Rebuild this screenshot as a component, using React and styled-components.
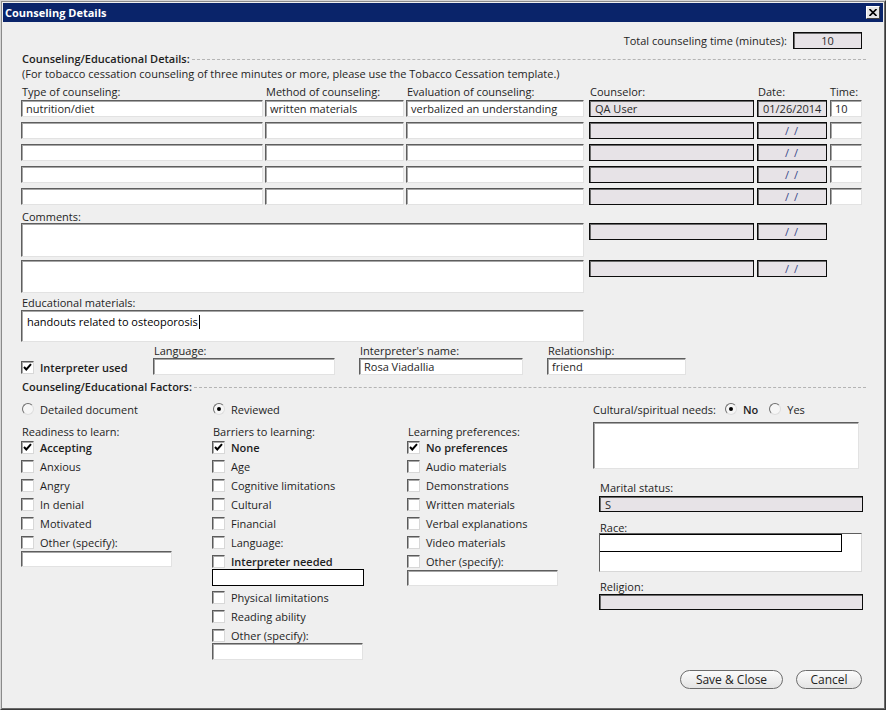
import React from "react"
import styled, { createGlobalStyle, css } from "styled-components"

const GlobalStyle = createGlobalStyle`
  html, body {
    margin: 0;
    padding: 0;
    background: #efefef;
  }
  body {
    font-family: "Open Sans", "Noto Sans", sans-serif;
    font-size: 11px;
    color: #1e1e1e;
  }
  * {
    box-sizing: border-box;
  }
`

const COLS = "244px 141px 183px 168px 73px 32px"

const readiness = ["Accepting", "Anxious", "Angry", "In denial", "Motivated"]
const barriersTop = ["None", "Age", "Cognitive limitations", "Cultural", "Financial", "Language:"]
const barriersBottom = ["Physical limitations", "Reading ability"]
const preferences = [
  "No preferences",
  "Audio materials",
  "Demonstrations",
  "Written materials",
  "Verbal explanations",
  "Video materials",
]

const emptyRows = [1, 2, 3, 4]

function CheckBox({ checked }) {
  return (
    <Box>
      {checked && (
        <svg width="9" height="9" viewBox="0 0 9 9">
          <path d="M1 4 L3.3 6.5 L8 1.2" fill="none" stroke="#000" strokeWidth="2" />
        </svg>
      )}
    </Box>
  )
}

function CheckItem({ label, checked }) {
  return (
    <CheckRow>
      <CheckBox checked={checked} />
      <CheckText $bold={checked}>{label}</CheckText>
    </CheckRow>
  )
}

function Radio({ label, checked }) {
  return (
    <RadioItem>
      <RadioDot $on={checked} />
      <CheckText $bold={checked && label === "No"}>{label}</CheckText>
    </RadioItem>
  )
}

function App() {
  return (
    <>
      <GlobalStyle />
      <Window>
        <TitleBar>
          <Title>Counseling Details</Title>
          <CloseBtn>
            <svg width="8" height="7" viewBox="0 0 8 7">
              <path d="M0.5 0 L7.5 7 M7.5 0 L0.5 7" stroke="#000" strokeWidth="1.6" />
            </svg>
          </CloseBtn>
        </TitleBar>
        <Body>
          <TotalRow>
            <span>Total counseling time (minutes):</span>
            <ReadBox $w={69} $center>10</ReadBox>
          </TotalRow>

          <Heading>
            <span>Counseling/Educational Details:</span>
            <Rule />
          </Heading>
          <Note>
            (For tobacco cessation counseling of three minutes or more, please use the Tobacco
            Cessation template.)
          </Note>

          <TableHead>
            <ColLabel>Type of counseling:</ColLabel>
            <ColLabel>Method of counseling:</ColLabel>
            <ColLabel>Evaluation of counseling:</ColLabel>
            <ColLabel>Counselor:</ColLabel>
            <ColLabel>Date:</ColLabel>
            <ColLabel $pad={0}>Time:</ColLabel>
          </TableHead>
          <TableBody>
            <Field $w={242}>nutrition/diet</Field>
            <Field $w={139}>written materials</Field>
            <Field $w={178}>verbalized an understanding</Field>
            <ReadBox $w={165}>QA User</ReadBox>
            <ReadBox $w={70} $center>01/26/2014</ReadBox>
            <Field $w={32}>10</Field>
            {emptyRows.map((n) => (
              <React.Fragment key={n}>
                <Field $w={242} />
                <Field $w={139} />
                <Field $w={178} />
                <ReadBox $w={165} />
                <ReadBox $w={70} $center>
                  <Slashes>/ /</Slashes>
                </ReadBox>
                <Field $w={32} />
              </React.Fragment>
            ))}
          </TableBody>

          <FieldLabel $top={5}>Comments:</FieldLabel>
          <CommentGrid>
            <TextArea $h={34} />
            <ReadBox $w={165} />
            <ReadBox $w={70} $center>
              <Slashes>/ /</Slashes>
            </ReadBox>
            <TextArea $h={33} />
            <ReadBox $w={165} />
            <ReadBox $w={70} $center>
              <Slashes>/ /</Slashes>
            </ReadBox>
          </CommentGrid>

          <FieldLabel $top={3}>Educational materials:</FieldLabel>
          <EduBox>
            handouts related to osteoporosis<Caret />
          </EduBox>

          <InterpreterRow>
            <InterpreterCheck>
              <CheckBox checked />
              <CheckText $bold>Interpreter used</CheckText>
            </InterpreterCheck>
            <Column>
              <FieldLabel $indent={1}>Language:</FieldLabel>
              <Field $w={182} />
            </Column>
            <Column>
              <FieldLabel>Interpreter&apos;s name:</FieldLabel>
              <Field $w={164}>Rosa Viadallia</Field>
            </Column>
            <Column>
              <FieldLabel>Relationship:</FieldLabel>
              <Field $w={139}>friend</Field>
            </Column>
          </InterpreterRow>

          <Heading $top={5}>
            <span>Counseling/Educational Factors:</span>
            <Rule />
          </Heading>

          <FactorsGrid>
            <Radio label="Detailed document" />
            <Radio label="Reviewed" checked />
            <div />
            <NeedsRow>
              <span>Cultural/spiritual needs:</span>
              <Radio label="No" checked />
              <Radio label="Yes" />
            </NeedsRow>

            <List>
              <ListTitle>Readiness to learn:</ListTitle>
              {readiness.map((r, i) => (
                <CheckItem key={r} label={r} checked={i === 0} />
              ))}
              <CheckItem label="Other (specify):" />
              <Field $w={151} $h={16} $mt={-1} />
            </List>

            <List>
              <ListTitle>Barriers to learning:</ListTitle>
              {barriersTop.map((b, i) => (
                <CheckItem key={b} label={b} checked={i === 0} />
              ))}
              <CheckRow>
                <CheckBox />
                <CheckText $bold>Interpreter needed</CheckText>
              </CheckRow>
              <PlainBox />
              {barriersBottom.map((b) => (
                <CheckItem key={b} label={b} />
              ))}
              <CheckItem label="Other (specify):" />
              <Field $w={151} $mt={-2} />
            </List>

            <List>
              <ListTitle>Learning preferences:</ListTitle>
              {preferences.map((p, i) => (
                <CheckItem key={p} label={p} checked={i === 0} />
              ))}
              <CheckItem label="Other (specify):" />
              <Field $w={151} $h={16} $mt={-1} />
            </List>

            <SideColumn>
              <TextArea $w={266} $h={47} />
              <SideFields>
                <FieldLabel $top={12}>Marital status:</FieldLabel>
                <ReadBox $w={264} $h={16} $mt={2}>S</ReadBox>
                <FieldLabel $top={9}>Race:</FieldLabel>
                <RaceBox>
                  <RaceItem />
                </RaceBox>
                <FieldLabel $top={8}>Religion:</FieldLabel>
                <ReadBox $w={264} $h={16} $mt={1} />
              </SideFields>
            </SideColumn>
          </FactorsGrid>

          <Footer>
            <Button $w={103}>Save &amp; Close</Button>
            <Button $w={66}>Cancel</Button>
          </Footer>
        </Body>
      </Window>
    </>
  )
}

export default App

const sunken = css`
  background: #fff;
  border: 1px solid;
  border-color: #5e5e5e #e2e2e2 #e2e2e2 #5e5e5e;
  box-shadow: inset 1px 1px 0 #a6a6a6;
`

const Window = styled.div`
  width: 886px;
  height: 710px;
  display: flex;
  flex-direction: column;
  padding: 2px;
  background: #efefef;
  border: 1px solid;
  border-color: #d6d6d6 #3a3a3a #3a3a3a #d6d6d6;
  box-shadow: inset 1px 1px 0 #8a8a8a, inset -1px -1px 0 #6a6a6a;
`

const TitleBar = styled.div`
  height: 19px;
  display: flex;
  align-items: center;
  justify-content: space-between;
  padding: 0 3px 0 2px;
  background: #0a246a;
`

const Title = styled.span`
  font-family: "Open Sans", sans-serif;
  font-size: 11px;
  font-weight: 700;
  color: #fff;
`

const CloseBtn = styled.div`
  width: 14px;
  height: 13px;
  display: flex;
  align-items: center;
  justify-content: center;
  background: #e6e6e6;
  border: 1px solid;
  border-color: #fff #404040 #404040 #fff;
`

const Body = styled.div`
  flex: 1;
  display: flex;
  flex-direction: column;
  padding: 10px 21px 18px 18px;
`

const TotalRow = styled.div`
  display: flex;
  justify-content: flex-end;
  align-items: center;
  gap: 6px;
  height: 17px;
`

const Heading = styled.div`
  display: flex;
  align-items: center;
  gap: 2px;
  height: 13px;
  margin-top: ${(p) => p.$top ?? 3}px;
  margin-right: -4px;
  padding-left: 1px;
  font-weight: 600;
  white-space: nowrap;
`

const Rule = styled.div`
  flex: 1;
  height: 1px;
  margin-top: 2px;
  border-top: 1px dashed #b4b4b4;
`

const Note = styled.div`
  height: 13px;
  line-height: 13px;
  margin-top: 2px;
  padding-left: 1px;
  white-space: nowrap;
`

const TableHead = styled.div`
  display: grid;
  grid-template-columns: ${COLS};
  margin-top: 5px;
`

const ColLabel = styled.div`
  height: 13px;
  line-height: 13px;
  padding-left: ${(p) => p.$pad ?? 1}px;
  white-space: nowrap;
`

const TableBody = styled.div`
  display: grid;
  grid-template-columns: ${COLS};
  row-gap: 5px;
  margin-top: 2px;
`

const Field = styled.div`
  ${sunken}
  width: ${(p) => p.$w}px;
  height: ${(p) => p.$h ?? 17}px;
  margin-top: ${(p) => p.$mt ?? 0}px;
  padding: 0 4px;
  line-height: 15px;
  white-space: nowrap;
  overflow: hidden;
`

const ReadBox = styled.div`
  width: ${(p) => p.$w}px;
  height: ${(p) => p.$h ?? 17}px;
  margin-top: ${(p) => p.$mt ?? 0}px;
  padding: 0 5px;
  line-height: 15px;
  text-align: ${(p) => (p.$center ? "center" : "left")};
  background: #e7e3e7;
  border: 1px solid #0c0c0c;
  box-shadow: inset 1px 1px 0 #6a6a6a;
  color: #2a2a2a;
  white-space: nowrap;
`

const Slashes = styled.span`
  color: #3a4a8a;
  letter-spacing: 1px;
`

const FieldLabel = styled.div`
  height: 13px;
  line-height: 13px;
  margin-top: ${(p) => p.$top ?? 0}px;
  padding-left: ${(p) => p.$indent ?? 1}px;
  white-space: nowrap;
`

const CommentGrid = styled.div`
  display: grid;
  grid-template-columns: 568px 168px 73px;
  row-gap: 3px;
  align-items: start;
`

const TextArea = styled.div`
  ${sunken}
  width: ${(p) => p.$w ?? 563}px;
  height: ${(p) => p.$h}px;
`

const EduBox = styled.div`
  ${sunken}
  width: 563px;
  height: 32px;
  margin-top: 1px;
  padding: 3px 5px;
  font-size: 11px;
  line-height: 15px;
  color: #000;
`

const Caret = styled.span`
  display: inline-block;
  width: 1px;
  height: 14px;
  margin-left: 1px;
  vertical-align: -3px;
  background: #000;
`

const InterpreterRow = styled.div`
  display: flex;
  align-items: flex-end;
  gap: 24px;
  margin-top: 2px;
`

const InterpreterCheck = styled.div`
  width: 108px;
  height: 16px;
  display: flex;
  align-items: center;
  gap: 6px;
`

const Column = styled.div`
  display: flex;
  flex-direction: column;
  gap: 1px;
`

const FactorsGrid = styled.div`
  display: grid;
  grid-template-columns: 191px 195px 186px 1fr;
  grid-template-rows: 14px auto;
  row-gap: 6px;
  margin-top: 9px;
`

const RadioItem = styled.div`
  display: inline-flex;
  align-items: center;
  gap: 6px;
  height: 14px;
  padding-left: 1px;
`

const RadioDot = styled.span`
  position: relative;
  width: 12px;
  height: 12px;
  border-radius: 50%;
  background: #f6f6f6;
  border: 1px solid;
  border-color: #6e6e6e #dedede #dedede #6e6e6e;

  &::after {
    content: "";
    display: ${(p) => (p.$on ? "block" : "none")};
    position: absolute;
    left: 3px;
    top: 3px;
    width: 4px;
    height: 4px;
    border-radius: 50%;
    background: #000;
  }
`

const NeedsRow = styled.div`
  display: flex;
  align-items: center;
  gap: 10px;

  & > span {
    margin-right: -2px;
  }
`

const List = styled.div`
  display: flex;
  flex-direction: column;
  padding-top: 3px;
`

const ListTitle = styled.div`
  height: 13px;
  line-height: 13px;
  padding-left: 1px;
`

const CheckRow = styled.div`
  height: 19px;
  display: flex;
  align-items: center;
  gap: 6px;
`

const Box = styled.span`
  width: 13px;
  height: 13px;
  display: flex;
  align-items: center;
  justify-content: center;
  flex-shrink: 0;
  background: #fff;
  border: 1px solid;
  border-color: #5a5a5a #d8d8d8 #d8d8d8 #5a5a5a;
  box-shadow: inset 1px 1px 0 #a8a8a8;
`

const CheckText = styled.span`
  font-weight: ${(p) => (p.$bold ? 600 : 400)};
  white-space: nowrap;
`

const PlainBox = styled.div`
  width: 152px;
  height: 17px;
  margin: -2px 0 2px;
  background: #fff;
  border: 1px solid #000;
`

const SideColumn = styled.div`
  display: flex;
  flex-direction: column;
`

const SideFields = styled.div`
  display: flex;
  flex-direction: column;
  padding-left: 6px;
`

const RaceBox = styled.div`
  ${sunken}
  width: 263px;
  height: 39px;
  margin-top: -1px;
  background: #fff;
  border-color: #5e5e5e #d8d8d8 #d8d8d8 #5e5e5e;
  box-shadow: none;
`

const RaceItem = styled.div`
  width: 242px;
  height: 18px;
  border: 1px solid #000;
  border-left: none;
`

const Footer = styled.div`
  margin-top: auto;
  display: flex;
  justify-content: flex-end;
  gap: 13px;
`

const Button = styled.div`
  width: ${(p) => p.$w}px;
  height: 19px;
  display: flex;
  align-items: center;
  justify-content: center;
  border: 1px solid #6c6c6c;
  border-radius: 10px;
  background: linear-gradient(#fbfbfb, #e4e4e4);
  font-size: 12px;
  color: #222;
`
